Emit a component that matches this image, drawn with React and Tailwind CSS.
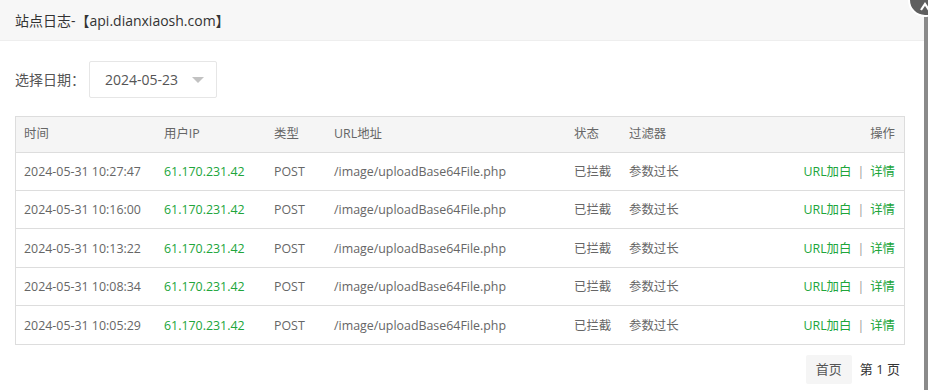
import React from "react";

const rows = [
  "2024-05-31 10:27:47",
  "2024-05-31 10:16:00",
  "2024-05-31 10:13:22",
  "2024-05-31 10:08:34",
  "2024-05-31 10:05:29",
];

const font = { fontFamily: '"Open Sans", "Noto Sans CJK SC", sans-serif' };

export default function App() {
  return (
    <div className="relative w-[928px] h-[390px] overflow-hidden bg-white flex" style={font}>
      <div className="w-[924px] h-full flex flex-col">
        <div className="h-[41px] bg-[#f7f7f7] border-b border-[#eeeeee] flex items-center pl-[15px] text-[14px] text-[#333]">
          站点日志-【api.dianxiaosh.com】
        </div>
        <div className="flex items-center pl-[15px] mt-[20px] h-[37px]">
          <span className="text-[14px] text-[#555] w-[74px]">选择日期：</span>
          <div className="w-[128px] h-[37px] border border-[#e6e6e6] rounded-[2px] flex items-center pl-[15px] pr-[12px] justify-between">
            <span className="text-[14px] text-[#555]">2024-05-23</span>
            <span className="w-0 h-0 border-l-[6px] border-r-[6px] border-t-[6px] border-l-transparent border-r-transparent border-t-[#c2c2c2]" />
          </div>
        </div>
        <div className="ml-[15px] mr-[19px] mt-[18px] border border-[#dddddd]">
          <table className="w-full border-collapse text-[12.4px] text-[#666]">
            <thead>
              <tr className="h-[35px] bg-[#f5f5f5] text-left">
                <th className="font-normal pl-[8px] w-[140px]">时间</th>
                <th className="font-normal pl-[8px] w-[110px]">用户IP</th>
                <th className="font-normal pl-[8px] w-[60px]">类型</th>
                <th className="font-normal pl-[8px] w-[240px]">URL地址</th>
                <th className="font-normal pl-[8px] w-[55px]">状态</th>
                <th className="font-normal pl-[8px]">过滤器</th>
                <th className="font-normal pr-[9px] text-right">操作</th>
              </tr>
            </thead>
            <tbody>
              {rows.map((t) => (
                <tr key={t} className="h-[38.4px] border-t border-[#dddddd]">
                  <td className="pl-[8px] pt-[2px]">{t}</td>
                  <td className="pl-[8px] pt-[2px] text-[#20a53a]">61.170.231.42</td>
                  <td className="pl-[8px] pt-[2px]">POST</td>
                  <td className="pl-[8px] pt-[2px]">/image/uploadBase64File.php</td>
                  <td className="pl-[8px] pt-[2px]">已拦截</td>
                  <td className="pl-[8px] pt-[2px]">参数过长</td>
                  <td className="pr-[9px] pt-[2px] text-right">
                    <span className="text-[#20a53a]">URL加白</span>
                    <span className="text-[#999] mx-[6px]">|</span>
                    <span className="text-[#20a53a]">详情</span>
                  </td>
                </tr>
              ))}
            </tbody>
          </table>
        </div>
        <div className="flex justify-end items-center mt-[10px] pr-[24px] text-[13px] text-[#555]">
          <div className="w-[46px] h-[29px] bg-[#f5f5f5] rounded-[2px] flex items-center justify-center">首页</div>
          <span className="ml-[8px] text-[#333]">第 1 页</span>
        </div>
      </div>
      <div className="w-[4px] h-full bg-[#8a8a8a]" />
      <div className="absolute left-[908px] top-[-17px] w-[34px] h-[34px] rounded-full bg-[#5f5f5f] border-[2px] border-white flex items-end justify-center pb-[4px]">
        <svg width="12" height="10" viewBox="0 0 12 10">
          <path d="M2 9 L6 3 L10 9" stroke="white" strokeWidth="2.2" fill="none" />
        </svg>
      </div>
    </div>
  );
}
